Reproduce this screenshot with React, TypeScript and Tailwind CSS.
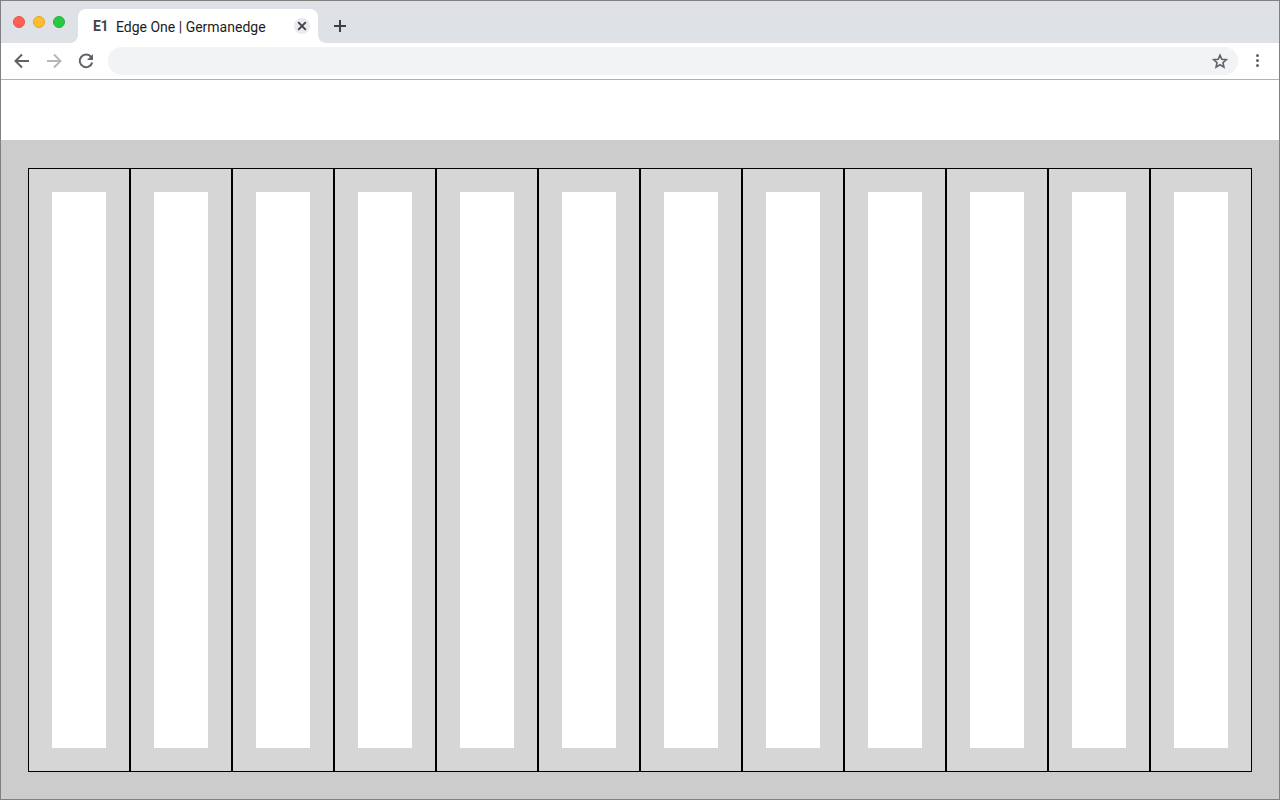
import React from "react";

const cols = Array.from({ length: 12 }, (_, i) => i);

export default function App() {
  return (
    <div className="w-[1280px] h-[800px] overflow-hidden border border-[#808080] bg-white flex flex-col font-['Roboto',sans-serif]">
      {/* Title bar */}
      <div className="h-[42px] flex shrink-0 bg-white">
        <div className="w-[77px] bg-[#dee1e6] rounded-br-[8px] flex items-start gap-2 pl-3 pt-[15px]">
          <span className="w-3 h-3 rounded-full bg-[#ff5f57] border border-[#e5534b]" />
          <span className="w-3 h-3 rounded-full bg-[#ffbd2e] border border-[#e0a526]" />
          <span className="w-3 h-3 rounded-full bg-[#28c940] border border-[#23b139]" />
        </div>
        <div className="w-[240px] bg-[#dee1e6] pt-2">
          <div className="h-[34px] bg-white rounded-t-[8px] flex items-center pl-[15px] pr-2">
            <span className="w-[23px] text-[14px] tracking-[-0.4px] font-bold text-[#444444] leading-none">E1</span>
            <span className="pt-[2px] text-[14px] text-[#1c1c1c] leading-none flex-1 whitespace-nowrap">Edge One | Germanedge</span>
            <span className="w-4 h-4 rounded-full bg-[#e8eaed] flex items-center justify-center">
              <svg width="10" height="10" viewBox="0 0 10 10" fill="none" stroke="#3f4145" strokeWidth="1.9">
                <path d="M1.2 1.2 8.8 8.8M8.8 1.2 1.2 8.8" />
              </svg>
            </span>
          </div>
        </div>
        <div className="flex-1 bg-[#dee1e6] rounded-bl-[8px] flex items-center pl-4 pt-[8px]">
          <svg width="12" height="12" viewBox="0 0 12 12" fill="none" stroke="#3c4043" strokeWidth="2">
            <path d="M6 0v12M0 6h12" />
          </svg>
        </div>
      </div>

      {/* Toolbar */}
      <div className="h-[37px] shrink-0 flex items-center border-b border-[#b2b2b2] pl-[13px] pr-[16px] pb-[1px] bg-white">
        <svg width="16" height="16" viewBox="0 0 16 16" fill="none" stroke="#5f6368" strokeWidth="2">
          <path d="M15 8H2M8 1.5 1.5 8l6.5 6.5" />
        </svg>
        <svg className="ml-4" width="16" height="16" viewBox="0 0 16 16" fill="none" stroke="#b4b6b9" strokeWidth="2">
          <path d="M1 8h13M8 1.5 14.5 8 8 14.5" />
        </svg>
        <svg className="ml-4" width="16" height="16" viewBox="0 0 16 16" fill="none">
          <path d="M13.2 4.2A6.3 6.3 0 1 0 14.2 9.4" stroke="#5f6368" strokeWidth="2" />
          <path d="M15 1v6H9z" fill="#5f6368" />
        </svg>
        <div className="ml-[14px] w-[1130px] h-7 rounded-full bg-[#f1f3f4] flex items-center justify-end pr-[10px]">
          <svg width="16" height="16" viewBox="0 0 24 24" fill="none" stroke="#5f6368" strokeWidth="2.4" strokeLinejoin="miter">
            <path d="M12 3.2l2.7 6.2 6.8.6-5.1 4.5 1.5 6.6L12 17.6l-5.9 3.5 1.5-6.6L2.5 10l6.8-.6z" />
          </svg>
        </div>
        <div className="ml-[18px] flex flex-col gap-[2px]">
          <span className="w-[3px] h-[3px] rounded-full bg-[#5f6368]" />
          <span className="w-[3px] h-[3px] rounded-full bg-[#5f6368]" />
          <span className="w-[3px] h-[3px] rounded-full bg-[#5f6368]" />
        </div>
      </div>

      {/* White strip */}
      <div className="h-[60px] shrink-0 bg-white" />

      {/* Content */}
      <div className="flex-1 bg-[#cccccc] pt-[28px] pl-[27px] flex">
        {cols.map((i) => (
          <div key={i} className="w-[102px] h-[604px] border border-black bg-[#d6d6d6] p-[23px]">
            <div className="w-[54px] h-[556px] bg-white" />
          </div>
        ))}
      </div>
    </div>
  );
}
